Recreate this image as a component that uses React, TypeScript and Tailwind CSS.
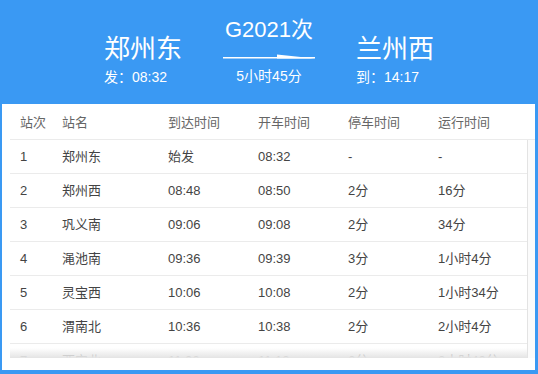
import React from 'react';

interface Stop {
  no: number;
  name: string;
  arrive: string;
  depart: string;
  stay: string;
  run: string;
}

const stops: Stop[] = [
  { no: 1, name: '郑州东', arrive: '始发', depart: '08:32', stay: '-', run: '-' },
  { no: 2, name: '郑州西', arrive: '08:48', depart: '08:50', stay: '2分', run: '16分' },
  { no: 3, name: '巩义南', arrive: '09:06', depart: '09:08', stay: '2分', run: '34分' },
  { no: 4, name: '渑池南', arrive: '09:36', depart: '09:39', stay: '3分', run: '1小时4分' },
  { no: 5, name: '灵宝西', arrive: '10:06', depart: '10:08', stay: '2分', run: '1小时34分' },
  { no: 6, name: '渭南北', arrive: '10:36', depart: '10:38', stay: '2分', run: '2小时4分' },
  { no: 7, name: '西安北', arrive: '11:06', depart: '11:12', stay: '6分', run: '2小时40分' },
];

const font = { fontFamily: '"Liberation Sans", "Noto Sans CJK SC", sans-serif' };

function Cols({ cells }: { cells: string[] }) {
  const widths = ['w-[42px]', 'w-[106px]', 'w-[90px]', 'w-[90px]', 'w-[90px]', 'flex-1'];
  return (
    <>
      {cells.map((c, i) => (
        <div key={i} className={`${widths[i]} pl-[10px] whitespace-nowrap`}>
          {c}
        </div>
      ))}
    </>
  );
}

export default function App() {
  return (
    <div className="w-[538px] h-[374px] bg-[#3a99f3] flex flex-col" style={font}>
      {/* header */}
      <div className="h-[104px] flex items-start pl-[104px] text-white">
        <div className="w-[120px] pt-[34px]">
          <div className="text-[26px] leading-[30px]">郑州东</div>
          <div className="text-[14px] leading-[20px] mt-[3px]">发：08:32</div>
        </div>
        <div className="w-[90px] pt-[17px] flex flex-col items-center">
          <div className="text-[22px] leading-[26px] whitespace-nowrap">G2021次</div>
          <svg width="92" height="8" viewBox="0 0 92 8" className="mt-[9px]">
            <rect x="0" y="5" width="92" height="1.5" fill="#fff" />
            <polygon points="54,2.6 92,6.5 54,6.5" fill="#fff" />
          </svg>
          <div className="text-[14px] leading-[20px] mt-[6px] whitespace-nowrap">5小时45分</div>
        </div>
        <div className="ml-[42px] pt-[34px]">
          <div className="text-[26px] leading-[30px]">兰州西</div>
          <div className="text-[14px] leading-[20px] mt-[3px]">到：14:17</div>
        </div>
      </div>

      {/* body */}
      <div className="flex-1 bg-white ml-[2px] mr-[3px] mb-[4px] flex flex-col">
        <div className="ml-[8px] h-[36px] pt-[3px] flex items-center border-b border-[#ebebeb] text-[13px] text-[#666]">
          <Cols cells={['站次', '站名', '到达时间', '开车时间', '停车时间', '运行时间']} />
        </div>
        <div className="flex h-[218px]">
          <div className="relative ml-[8px] flex-1 overflow-hidden">
            {stops.map(s => (
              <div
                key={s.no}
                className="h-[34px] flex items-center border-b border-[#ebebeb] text-[13px] text-[#444]"
              >
                <Cols cells={[String(s.no), s.name, s.arrive, s.depart, s.stay, s.run]} />
              </div>
            ))}
            <div className="absolute left-0 right-0 bottom-0 h-[10px] bg-gradient-to-b from-white/40 to-[#e4e4e4]" />
          </div>
          <div className="w-[8px] border-l border-[#e3e3e3] bg-[#fbfbfb]" />
        </div>
      </div>
    </div>
  );
}
